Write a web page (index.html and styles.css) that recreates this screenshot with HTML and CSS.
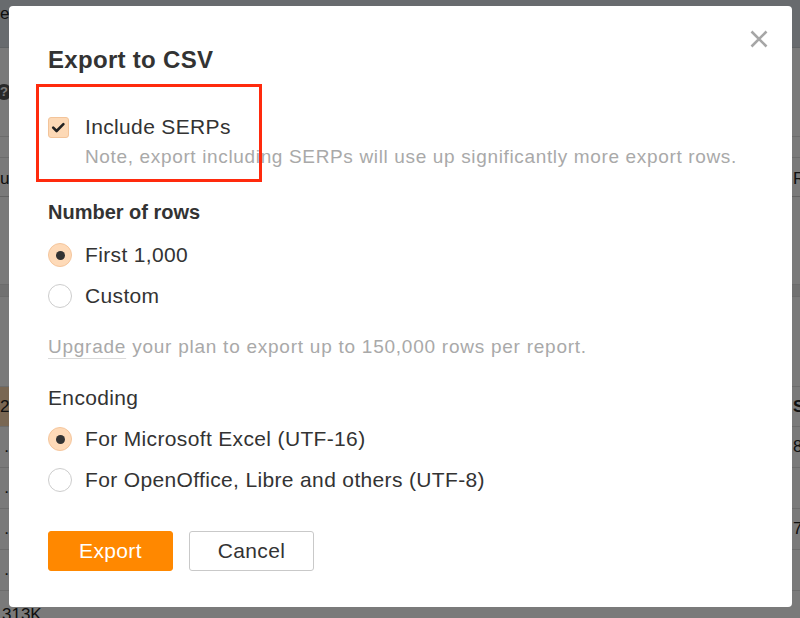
FILE: index.html
```html
<!DOCTYPE html>
<html lang="en">
<head>
<meta charset="utf-8">
<title>Export to CSV</title>
<link rel="stylesheet" href="styles.css">
</head>
<body>
<div class="page">
  <div class="topbar">e I found some keywords that are ideal for this article which is about keyword research tools</div>
  <div class="row r-help"><span class="help">?</span></div>
  <div class="row r-thin"></div>
  <div class="row r-head"><span class="cell-l">u</span><span class="cell-r">R</span></div>
  <div class="row r-tall"></div>
  <div class="row r-band"></div>
  <div class="row r-mid"></div>
  <div class="row r-hl"><span class="cell-l hl">2</span><span class="cell-r bold">S</span></div>
  <div class="row r-data"><span class="cell-l dot">.</span><span class="cell-r">8</span></div>
  <div class="row r-data"><span class="cell-l dot">.</span><span class="cell-r"></span></div>
  <div class="row r-data"><span class="cell-l dot">.</span><span class="cell-r">7</span></div>
  <div class="row r-data"><span class="cell-l dot">.</span><span class="cell-r"></span></div>
  <div class="row r-last"><span class="cell-l wide">313K</span></div>
</div>

<div class="overlay">
  <div class="modal" role="dialog" aria-labelledby="dlg-title">
    <button class="close" aria-label="Close">
      <svg viewBox="0 0 18 18" width="18" height="18"><path d="M1.5 1.5 L16.5 16.5 M16.5 1.5 L1.5 16.5" stroke="#a6a6a6" stroke-width="2.6" fill="none" stroke-linecap="butt"/></svg>
    </button>
    <h2 id="dlg-title" class="title">Export to CSV</h2>
    <div class="highlight"></div>
    <div class="check-row">
      <span class="checkbox"><svg viewBox="0 0 21 21" width="21" height="21"><path d="M5.2 10.6 L8.6 14 L15.4 7.2" stroke="#222" stroke-width="2.6" fill="none" stroke-linecap="round" stroke-linejoin="round"/></svg></span>
      <span class="label">Include SERPs</span>
    </div>
    <p class="note">Note, export including SERPs will use up significantly more export rows.</p>

    <div class="section-title">Number of rows</div>
    <div class="radio-row first"><span class="radio on"></span><span class="label">First 1,000</span></div>
    <div class="radio-row"><span class="radio"></span><span class="label">Custom</span></div>
    <p class="upgrade"><span class="link">Upgrade</span> your plan to export up to 150,000 rows per report.</p>

    <div class="section-label">Encoding</div>
    <div class="radio-row enc-first"><span class="radio on"></span><span class="label">For Microsoft Excel (UTF-16)</span></div>
    <div class="radio-row"><span class="radio"></span><span class="label">For OpenOffice, Libre and others (UTF-8)</span></div>

    <div class="buttons">
      <button class="btn btn-primary">Export</button>
      <button class="btn btn-default">Cancel</button>
    </div>
  </div>
</div>
</body>
</html>
```

FILE: styles.css
```css
html, body {
  margin: 0;
  padding: 0;
}
body {
  font-family: "Liberation Sans", Arial, Helvetica, sans-serif;
  color: #333;
  background: #fff;
}

/* ---------- underlying page ---------- */
.page {
  width: 800px;
  height: 618px;
  overflow: hidden;
  background: #fff;
  color: #222;
}
.topbar {
  height: 48px;
  box-sizing: border-box;
  background: #d9e0e6;
  border-bottom: 1px solid #c9cfd4;
  font-size: 17px;
  line-height: 28px;
  white-space: nowrap;
  overflow: hidden;
  color: #222;
}
.row {
  display: flex;
  align-items: center;
  justify-content: space-between;
  box-sizing: border-box;
  border-bottom: 1px solid #e2e2e2;
  font-size: 17px;
  overflow: hidden;
}
.r-help { height: 89px; }
.r-thin { height: 21px; }
.r-head { height: 39px; border-bottom-color: #d0d0d0; padding-top: 3px; }
.r-tall { height: 88px; }
.r-band { height: 12px; background: #ececec; }
.r-mid { height: 90px; }
.r-hl { height: 40px; align-items: stretch; }
.r-data { height: 41px; }
.r-last {
  height: 40px;
  align-items: flex-start;
  padding-top: 14px;
  border-bottom: none;
}
.help {
  width: 16px;
  height: 16px;
  margin-left: -4px;
  border-radius: 50%;
  background: #555;
  color: #fff;
  font-size: 13px;
  font-weight: bold;
  line-height: 16px;
  text-align: center;
}
.cell-l {
  width: 9px;
  overflow: hidden;
  white-space: nowrap;
}
.cell-l.hl {
  width: 10px;
  background: #fcd7ad;
  display: flex;
  align-items: center;
}
.cell-l.dot { text-align: right; }
.cell-l.wide { width: 60px; padding-left: 2px; line-height: 20px; }
.cell-r {
  width: 7px;
  overflow: hidden;
  white-space: nowrap;
}
.r-hl .cell-r { display: flex; align-items: center; }
.bold { font-weight: bold; }

/* ---------- overlay + modal ---------- */
.overlay {
  position: fixed;
  inset: 0;
  background: rgba(0, 0, 0, 0.52);
}
.modal {
  position: relative;
  margin: 6px 8px 0 9px;
  height: 601px;
  box-sizing: border-box;
  padding: 39px 39px 0 39px;
  background: #fff;
  border-radius: 4px;
  color: #333;
}
.close {
  position: absolute;
  top: 24px;
  right: 24px;
  width: 18px;
  height: 18px;
  padding: 0;
  border: none;
  background: transparent;
  cursor: pointer;
}
.close svg { display: block; }

.title {
  margin: 0;
  font-size: 24px;
  line-height: 30px;
  font-weight: bold;
  letter-spacing: 0.3px;
  color: #333;
}
.highlight {
  position: absolute;
  left: 27px;
  top: 78px;
  width: 226px;
  height: 98px;
  box-sizing: border-box;
  border: 3px solid #ff2a0d;
  pointer-events: none;
}

.label {
  font-size: 21px;
  letter-spacing: 0.35px;
  line-height: 26px;
  color: #333;
}
.check-row {
  display: flex;
  align-items: center;
  gap: 16px;
  height: 26px;
  margin-top: 39px;
}
.checkbox {
  width: 21px;
  height: 21px;
  box-sizing: border-box;
  border: 1px solid #f3c49a;
  border-radius: 3px;
  background: #fdd9b6;
  display: flex;
  align-items: center;
  justify-content: center;
}
.checkbox svg { display: block; margin: -1px; }

.note {
  margin: 5px 0 0 37px;
  font-size: 19px;
  line-height: 24px;
  letter-spacing: 0.65px;
  color: #a9a9a9;
  white-space: nowrap;
}

.section-title {
  margin-top: 30px;
  font-size: 20px;
  line-height: 26px;
  font-weight: bold;
  color: #333;
}
.section-label {
  margin-top: 26px;
  font-size: 21px;
  letter-spacing: 0.35px;
  line-height: 26px;
  color: #333;
}
.radio-row {
  display: flex;
  align-items: center;
  gap: 13px;
  height: 26px;
  margin-top: 15px;
}
.radio-row.first { margin-top: 17px; }
.radio-row.enc-first { margin-top: 15px; }
.radio {
  width: 24px;
  height: 24px;
  box-sizing: border-box;
  border-radius: 50%;
  border: 1.5px solid #cdcdcd;
  background: #fff;
  display: flex;
  align-items: center;
  justify-content: center;
  flex: none;
}
.radio.on {
  background: #fedab8;
  border: 1px solid #f5c69d;
}
.radio.on::after {
  content: "";
  width: 9px;
  height: 9px;
  border-radius: 50%;
  background: #333;
}

.upgrade {
  margin: 26px 0 0;
  font-size: 19px;
  line-height: 24px;
  letter-spacing: 0.75px;
  color: #a9a9a9;
  white-space: nowrap;
}
.upgrade .link {
  text-decoration: underline;
  text-decoration-color: #dadada;
  text-underline-offset: 5px;
  text-decoration-thickness: 1px;
}

.buttons {
  display: flex;
  gap: 16px;
  margin-top: 38px;
}
.btn {
  width: 125px;
  height: 40px;
  box-sizing: border-box;
  border-radius: 3px;
  font-family: inherit;
  font-size: 21px;
  letter-spacing: 0.35px;
  cursor: pointer;
  padding: 0;
}
.btn-primary {
  background: #ff8800;
  border: 1px solid #ff8800;
  color: #fff;
}
.btn-default {
  background: #fff;
  border: 1px solid #c9c9c9;
  color: #333;
}
```
